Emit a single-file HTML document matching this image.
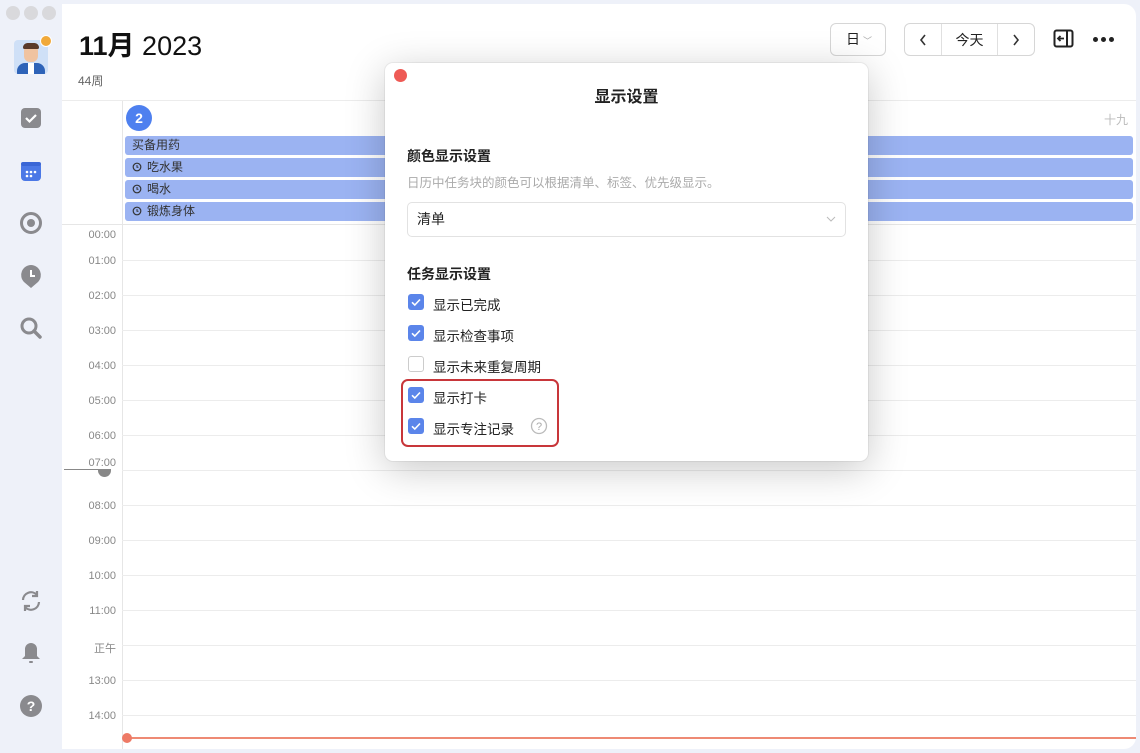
<!DOCTYPE html>
<html><head><meta charset="utf-8"><style>
*{margin:0;padding:0;box-sizing:border-box}
body{width:1140px;height:753px;overflow:hidden;background:#eef1f9;font-family:"Liberation Sans","Noto Sans CJK SC",sans-serif;position:relative;color:#222}
.abs{position:absolute}
.main{left:62px;top:4px;width:1074px;height:745px;background:#fff;border-radius:0 12px 12px 0}
.tl{left:6px;top:6px;width:14px;height:14px;border-radius:50%;background:#d9d9dc}
.ev{position:absolute;left:125px;width:1008px;height:19px;background:#9bb3f2;border-radius:3px;font-size:12px;color:#333;line-height:19px;padding-left:7px}
.ev svg{vertical-align:-2px;margin-right:5px}
.hl{position:absolute;left:122px;width:1014px;height:1px;background:#ececec}
.lb{position:absolute;width:52px;left:64px;text-align:right;font-size:11px;color:#888}
.modal{left:385px;top:63px;width:483px;height:398px;background:#fff;border-radius:8px;box-shadow:0 8px 40px rgba(0,0,0,.22),0 0 0 1px rgba(0,0,0,.05)}
.cb{position:absolute;left:23px;width:16px;height:16px;border-radius:3px;background:#5b85ea}
.cb.off{background:#fff;border:1px solid #ccc}
.cl{position:absolute;left:48px;font-size:13.5px;color:#222}
.btn{border:1px solid #d6d6d6;border-radius:6px;height:33px;background:#fff}
</style></head><body>
<div class="abs tl"></div><div class="abs tl" style="left:24px"></div><div class="abs tl" style="left:42px"></div>
<div class="abs" style="left:14px;top:40px;width:34px;height:34px;background:#cfe0f7;border-radius:4px;overflow:hidden">
<div class="abs" style="left:10px;top:5px;width:14px;height:17px;background:#f0c3a0;border-radius:6px"></div>
<div class="abs" style="left:9px;top:3px;width:16px;height:6px;background:#5a3a2a;border-radius:6px 6px 2px 2px"></div>
<div class="abs" style="left:3px;top:23px;width:28px;height:14px;background:#2e63b8;border-radius:8px 8px 0 0"></div>
<div class="abs" style="left:14px;top:23px;width:6px;height:11px;background:#fff"></div></div>
<div class="abs" style="left:40px;top:35px;width:12px;height:12px;border-radius:50%;background:#f1a93a;border:1.5px solid #fff"></div>
<svg class="abs" style="left:20px;top:107px" width="22" height="22"><rect x="1" y="1" width="20" height="20" rx="4" fill="#8a8a8e"/><path d="M6 11l3.5 3.5L16 8" stroke="#fff" stroke-width="2.2" fill="none"/></svg>
<svg class="abs" style="left:20px;top:160px" width="22" height="22"><rect x="1" y="2" width="20" height="19" rx="4" fill="#4b78e6"/><rect x="1" y="2" width="20" height="4" fill="#3a66d6" rx="2"/><g fill="#fff"><circle cx="7" cy="12" r="1.3"/><circle cx="11" cy="12" r="1.3"/><circle cx="15" cy="12" r="1.3"/><circle cx="7" cy="16" r="1.3"/><circle cx="11" cy="16" r="1.3"/></g></svg>
<svg class="abs" style="left:19px;top:211px" width="24" height="24"><circle cx="12" cy="12" r="9.5" fill="none" stroke="#8a8a8e" stroke-width="3"/><circle cx="12" cy="12" r="4" fill="#8a8a8e"/></svg>
<svg class="abs" style="left:19px;top:264px" width="24" height="26"><path d="M12 1a10 10 0 0 1 7 17l-7 6-7-6A10 10 0 0 1 12 1z" fill="#8a8a8e"/><path d="M12 6v6h4" stroke="#fff" stroke-width="2" fill="none"/></svg>
<svg class="abs" style="left:19px;top:316px" width="24" height="24"><circle cx="10" cy="10" r="7" fill="none" stroke="#8a8a8e" stroke-width="3"/><path d="M15 15l6 6" stroke="#8a8a8e" stroke-width="3.5" stroke-linecap="round"/></svg>
<svg class="abs" style="left:19px;top:589px" width="24" height="24"><path d="M4 11a8 8 0 0 1 14-5M20 13a8 8 0 0 1-14 5" stroke="#8a8a8e" stroke-width="2.2" fill="none"/><path d="M18 2v5h-5M6 22v-5h5" stroke="#8a8a8e" stroke-width="2.2" fill="none"/></svg>
<svg class="abs" style="left:19px;top:641px" width="24" height="24"><path d="M12 2a6 6 0 0 1 6 6v7l3 3H3l3-3V8a6 6 0 0 1 6-6z" fill="#8a8a8e"/><rect x="10" y="20" width="4" height="2" rx="1" fill="#8a8a8e"/></svg>
<svg class="abs" style="left:19px;top:694px" width="24" height="24"><circle cx="12" cy="12" r="11" fill="#8a8a8e"/><text x="12" y="17" font-size="14" font-weight="bold" fill="#fff" text-anchor="middle" font-family="Liberation Sans">?</text></svg>
<div class="abs main"></div>
<div class="abs" style="left:79px;top:24px;font-size:27px;color:#111"><b>11月</b> 2023</div>
<div class="abs" style="left:78px;top:72px;font-size:12px;color:#666">44周</div>
<div class="abs btn" style="left:830px;top:23px;width:56px;font-size:14px;line-height:31px;padding-left:15px">日<span style="font-size:9px;color:#aaa;margin-left:3px">﹀</span></div>
<div class="abs btn" style="left:904px;top:23px;width:131px"><div class="abs" style="left:36px;top:0;width:1px;height:31px;background:#e0e0e0"></div><div class="abs" style="left:92px;top:0;width:1px;height:31px;background:#e0e0e0"></div>
<svg class="abs" style="left:13px;top:9px" width="10" height="14"><path d="M7 2L3 7l4 5" stroke="#333" stroke-width="1.6" fill="none"/></svg>
<div class="abs" style="left:37px;width:55px;top:6px;text-align:center;font-size:14px">今天</div>
<svg class="abs" style="left:106px;top:9px" width="10" height="14"><path d="M3 2l4 5-4 5" stroke="#333" stroke-width="1.6" fill="none"/></svg></div>
<svg class="abs" style="left:1053px;top:29px" width="22" height="20"><rect x="1.5" y="1.5" width="18" height="16" rx="2" fill="none" stroke="#222" stroke-width="2"/><path d="M14 2v15" stroke="#222" stroke-width="2"/><path d="M11 9.5H5M7.5 7L5 9.5 7.5 12" stroke="#222" stroke-width="1.8" fill="none"/></svg>
<div class="abs" style="left:1093px;top:37px;width:22px;height:5px"><i class="abs" style="left:0;width:5px;height:5px;border-radius:50%;background:#222"></i><i class="abs" style="left:8px;width:5px;height:5px;border-radius:50%;background:#222"></i><i class="abs" style="left:16px;width:5px;height:5px;border-radius:50%;background:#222"></i></div>
<div class="abs" style="left:62px;top:100px;width:1074px;height:1px;background:#ececec"></div>
<div class="abs" style="left:122px;top:101px;width:1px;height:648px;background:#e6e6e6"></div>
<div class="abs" style="left:126px;top:105px;width:26px;height:26px;border-radius:50%;background:#4e80ef;color:#fff;font-weight:bold;font-size:14px;text-align:center;line-height:26px">2</div>
<div class="abs" style="left:1104px;top:111px;font-size:12px;color:#bbb">十九</div>
<div class="ev" style="top:136px">买备用药</div>
<div class="ev" style="top:158px"><svg width="10" height="11"><circle cx="5" cy="5" r="3.8" fill="none" stroke="#333" stroke-width="1.2"/><path d="M5 3v2.3h1.5" stroke="#333" fill="none"/></svg>吃水果</div>
<div class="ev" style="top:180px"><svg width="10" height="11"><circle cx="5" cy="5" r="3.8" fill="none" stroke="#333" stroke-width="1.2"/><path d="M5 3v2.3h1.5" stroke="#333" fill="none"/></svg>喝水</div>
<div class="ev" style="top:202px"><svg width="10" height="11"><circle cx="5" cy="5" r="3.8" fill="none" stroke="#333" stroke-width="1.2"/><path d="M5 3v2.3h1.5" stroke="#333" fill="none"/></svg>锻炼身体</div>
<div class="abs" style="left:62px;top:224px;width:1074px;height:1px;background:#e6e6e6"></div>
<div class="lb" style="top:229px">00:00</div>
<div class="hl" style="top:260px"></div><div class="lb" style="top:255px">01:00</div>
<div class="hl" style="top:295px"></div><div class="lb" style="top:290px">02:00</div>
<div class="hl" style="top:330px"></div><div class="lb" style="top:325px">03:00</div>
<div class="hl" style="top:365px"></div><div class="lb" style="top:360px">04:00</div>
<div class="hl" style="top:400px"></div><div class="lb" style="top:395px">05:00</div>
<div class="hl" style="top:435px"></div><div class="lb" style="top:430px">06:00</div>
<div class="hl" style="top:470px"></div><div class="lb" style="top:457px">07:00</div>
<div class="abs" style="left:64px;top:469px;width:45px;height:1px;background:#888"></div>
<div class="abs" style="left:98px;top:469px;width:13px;height:8px;border-radius:0 0 7px 7px;background:#888"></div>
<div class="hl" style="top:505px"></div><div class="lb" style="top:500px">08:00</div>
<div class="hl" style="top:540px"></div><div class="lb" style="top:535px">09:00</div>
<div class="hl" style="top:575px"></div><div class="lb" style="top:570px">10:00</div>
<div class="hl" style="top:610px"></div><div class="lb" style="top:605px">11:00</div>
<div class="hl" style="top:645px"></div><div class="lb" style="top:640px">正午</div>
<div class="hl" style="top:680px"></div><div class="lb" style="top:675px">13:00</div>
<div class="hl" style="top:715px"></div><div class="lb" style="top:710px">14:00</div>
<div class="abs" style="left:127px;top:737px;width:1009px;height:2px;background:#ee8a74"></div>
<div class="abs" style="left:122px;top:733px;width:10px;height:10px;border-radius:50%;background:#ee7a66"></div>
<div class="abs modal">
<div class="abs" style="left:9px;top:6px;width:13px;height:13px;border-radius:50%;background:#ee5a55"></div>
<div class="abs" style="left:0;width:483px;top:20px;text-align:center;font-size:16px;font-weight:bold">显示设置</div>
<div class="abs" style="left:22px;top:83px;font-size:14px;font-weight:bold">颜色显示设置</div>
<div class="abs" style="left:22px;top:109px;font-size:12.5px;color:#aaa">日历中任务块的颜色可以根据清单、标签、优先级显示。</div>
<div class="abs" style="left:22px;top:139px;width:439px;height:35px;border:1px solid #e2e2e2;border-radius:5px;font-size:14px;line-height:33px;padding-left:9px">清单<svg class="abs" style="left:418px;top:13px" width="10" height="7"><path d="M1 1l4 4 4-4" stroke="#bbb" fill="none"/></svg></div>
<div class="abs" style="left:22px;top:201px;font-size:14px;font-weight:bold">任务显示设置</div>
<div class="cb" style="top:231px"><svg width="16" height="16"><path d="M4 8.3l2.8 2.7L12 5.5" stroke="#fff" stroke-width="1.6" fill="none"/></svg></div><div class="cl" style="top:231px">显示已完成</div>
<div class="cb" style="top:262px"><svg width="16" height="16"><path d="M4 8.3l2.8 2.7L12 5.5" stroke="#fff" stroke-width="1.6" fill="none"/></svg></div><div class="cl" style="top:262px">显示检查事项</div>
<div class="cb off" style="top:293px"></div><div class="cl" style="top:293px">显示未来重复周期</div>
<div class="cb" style="top:324px"><svg width="16" height="16"><path d="M4 8.3l2.8 2.7L12 5.5" stroke="#fff" stroke-width="1.6" fill="none"/></svg></div><div class="cl" style="top:324px">显示打卡</div>
<div class="cb" style="top:355px"><svg width="16" height="16"><path d="M4 8.3l2.8 2.7L12 5.5" stroke="#fff" stroke-width="1.6" fill="none"/></svg></div><div class="cl" style="top:355px">显示专注记录</div>
<svg class="abs" style="left:145px;top:354px" width="18" height="18"><circle cx="9" cy="9" r="7.5" fill="none" stroke="#bbb" stroke-width="1.3"/><text x="9" y="13" font-size="11" fill="#aaa" text-anchor="middle" font-family="Liberation Sans">?</text></svg>
<div class="abs" style="left:16px;top:316px;width:158px;height:68px;border:2.5px solid #c8363a;border-radius:7px"></div>
</div>
</body></html>
